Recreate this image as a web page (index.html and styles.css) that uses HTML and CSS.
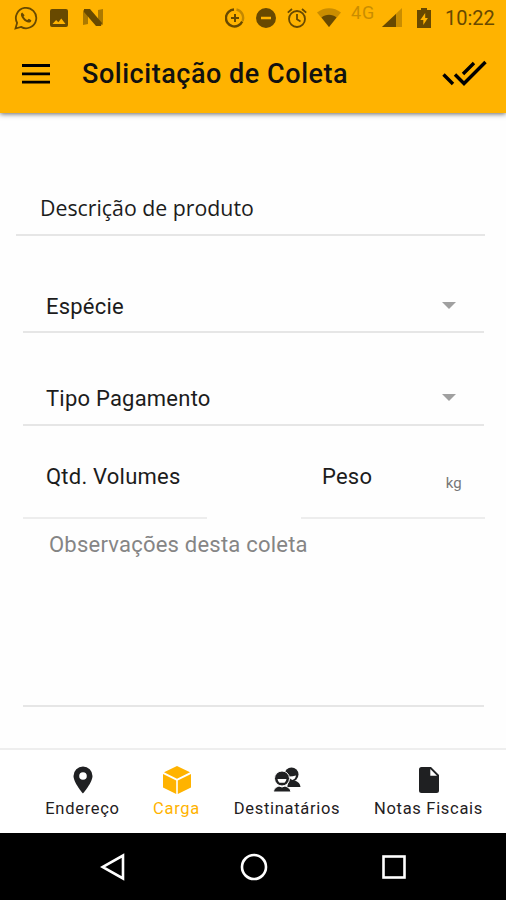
FILE: index.html
```html
<!DOCTYPE html>
<html lang="pt-BR">
<head>
    <meta charset="UTF-8">
    <meta name="viewport" content="width=device-width, initial-scale=1.0">
    <title>Solicitação de Coleta</title>
    <link rel="stylesheet" href="styles.css">
</head>
<body>
    <header class="topo">
        <div class="status">
            <svg class="s-whats" width="24" height="24" viewBox="0 0 24 24"><path d="M1.5 22.5l1.6-5.6A10.2 10.2 0 1 1 7 20.9z" fill="none" stroke="currentColor" stroke-width="1.8"/><path d="M8.2 6.5c-1.7.8-1.6 2.8-.5 4.7 1.5 2.7 3.6 4.6 6.3 5.3 1.9.5 3.3-.6 3.3-2.3l-2.500-1.400-1.400 1.300c-1.800-.7-3.100-1.900-3.800-3.500l1-1.300z" fill="currentColor"/></svg>
            <svg class="s-foto" width="18" height="18" viewBox="0 0 18 18"><path fill="currentColor" fill-rule="evenodd" d="M2 0h14a2 2 0 0 1 2 2v14a2 2 0 0 1-2 2H2a2 2 0 0 1-2-2V2a2 2 0 0 1 2-2zM2.500 15h13l-4.200-5.500-3 3.800-2.200-2.400z"/></svg>
            <svg class="s-n" width="20" height="17" viewBox="0 0 20 17"><path d="M0 1l5 3v11l-5 1zM15 1l5-1v16l-5-3z" fill="currentColor" opacity=".55"/><path d="M1 0h6l12 14-1 3h-5L1 3z" fill="currentColor"/></svg>

            <svg class="s-dados" width="20" height="20" viewBox="0 0 20 20"><g fill="none" stroke="currentColor" stroke-width="2.4"><path d="M9 1.500a8.500 8.500 0 1 0 8.200 12"/><path d="M11.500 1.500a8.500 8.500 0 0 1 6 11.500" opacity=".4"/><path d="M10 6v8M6 10h8" stroke-width="2"/></g></svg>
            <svg class="s-dnd" width="20" height="20" viewBox="0 0 20 20"><path fill="currentColor" fill-rule="evenodd" d="M10 0a10 10 0 1 1 0 20 10 10 0 0 1 0-20zM5 8.700v2.600h10V8.700z"/></svg>
            <svg class="s-alarme" width="20" height="20" viewBox="0 0 20 20"><g fill="none" stroke="currentColor" stroke-width="1.8"><circle cx="10" cy="11" r="8"/><path d="M10 6v5.200l3.500 2.200M.8 4.600L5 1M19.200 4.600L15 1"/></g></svg>
            <svg class="s-wifi" width="24" height="19" viewBox="0 0 24 19"><path d="M0 4.500C7-1.300 17-1.300 24 4.500L12 19z" fill="currentColor" opacity=".35"/><path d="M4.500 9.500c4-3.600 11-3.600 15 0L12 19z" fill="currentColor"/></svg>
            <span class="rede">4G</span>
            <svg class="s-sinal" width="20" height="19" viewBox="0 0 20 19"><path d="M20 0v19H0z" fill="currentColor" opacity=".35"/><path d="M14 6v13H0z" fill="currentColor"/></svg>
            <svg class="s-bateria" width="14" height="20" viewBox="0 0 14 20"><path fill="currentColor" fill-rule="evenodd" d="M4 0h6v2h4v18H0V2h4zM8.200 5L3.300 12H6.300v5l4.600-7H8.200z"/></svg>
            <span class="hora">10:22</span>
        </div>
        <div class="barra">
            <svg class="menu" width="28" height="20" viewBox="0 0 28 20"><path d="M0 1.500h28M0 9.800h28M0 18.100h28" stroke="#000" stroke-width="2.8"/></svg>
            <h1>Solicitação de Coleta</h1>
            <svg class="confirmar" width="46" height="28" viewBox="0 0 46 28"><path d="M2.500 14.500L12 24M14 14.500L23 23.500 44.500 2M22 14L33 3" fill="none" stroke="#000" stroke-width="3.4"/></svg>
        </div>
    </header>

    <main class="formulario">
        <div class="campo descricao">Descrição de produto</div>
        <div class="campo select especie">Espécie <span class="seta"></span></div>
        <div class="campo select pagamento">Tipo Pagamento <span class="seta"></span></div>
        <div class="linha">
            <div class="campo volumes">Qtd. Volumes</div>
            <div class="campo peso">Peso <span class="kg">kg</span></div>
        </div>
        <div class="campo observacoes">Observações desta coleta</div>
    </main>

    <nav class="abas">
        <a class="aba endereco">
            <svg width="20" height="28" viewBox="0 0 20 28"><path fill="currentColor" fill-rule="evenodd" d="M10 .500a9.500 9.500 0 0 1 9.500 9.500C19.500 16.500 10 27.500 10 27.500S.500 16.500.500 10A9.500 9.500 0 0 1 10 .500zM10 6.200a3.800 3.800 0 1 0 0 7.600 3.800 3.800 0 0 0 0-7.600z"/></svg>
            <span>Endereço</span>
        </a>
        <a class="aba carga ativa">
            <svg width="28" height="28" viewBox="0 0 28 28"><path fill="currentColor" d="M14 0l13 6.200L14 12.800 1 6.200zM0 8l13.200 6.500V28L0 21.500zM28 8l-13.200 6.500V28L28 21.500z"/></svg>
            <span>Carga</span>
        </a>
        <a class="aba destinatarios">
            <svg width="28" height="26" viewBox="0 0 28 26"><path d="M14 20l2-6 6-.5c3.500 1.500 5 3 5.500 6.500z" fill="currentColor"/><circle cx="18.500" cy="7.500" r="7" fill="currentColor"/><path d="M16 9.500q4 0 7-1-.5 3.500-3.500 4.500-2.500-.5-3.500-3.500z" fill="#fff"/><path d="M.5 25c.5-4 3-5 5.500-6l3 1 3-1c3 1 5.500 2.500 6 6z" fill="currentColor" stroke="#fff"/><circle cx="9" cy="11.500" r="7.500" fill="currentColor" stroke="#fff"/><path d="M4.500 12h9q-.5 3-2 3.700H6.500q-1.500-.7-2-3.700z" fill="#fff"/></svg>
            <span>Destinatários</span>
        </a>
        <a class="aba notas">
            <svg width="20" height="26" viewBox="0 0 20 26"><path fill="currentColor" fill-rule="evenodd" d="M2.500 0H12l8 8v15.500a2.500 2.500 0 0 1-2.500 2.500h-15A2.500 2.500 0 0 1 0 23.500v-21A2.500 2.500 0 0 1 2.500 0zM11.300 2v6.700H18z"/></svg>
            <span>Notas Fiscais</span>
        </a>
    </nav>

    <footer class="android">
        <svg width="26" height="28" viewBox="0 0 26 28"><path d="M23 2.500v23L2.500 14z" fill="none" stroke="#fff" stroke-width="2.6"/></svg>
        <svg width="28" height="28" viewBox="0 0 28 28"><circle cx="14" cy="14" r="12" fill="none" stroke="#fff" stroke-width="2.6"/></svg>
        <svg width="26" height="26" viewBox="0 0 26 26"><rect x="2.500" y="2.500" width="21" height="21" fill="none" stroke="#fff" stroke-width="2.6"/></svg>
    </footer>
</body>
</html>
```
FILE: styles.css
```css
* {
    box-sizing: border-box;
}

body {
    margin: 0;
    height: 900px;
    display: flex;
    flex-direction: column;
    background-color: #fefefe;
    font-family: Roboto, sans-serif;
    color: #1c1c1c;
    overflow: hidden;
}

svg {
    display: block;
    flex-shrink: 0;
}

.topo {
    height: 113px;
    background-color: #ffb300;
    box-shadow: 0 1px 5px rgba(0, 0, 0, 0.6);
}

.status {
    height: 35px;
    display: flex;
    align-items: center;
    padding: 0 11px 0 14px;
    color: #684900;
}

.s-foto {
    margin-left: 12px;
}

.s-n {
    margin-left: 15px;
}

.s-dados {
    margin-left: auto;
}

.s-dnd {
    margin-left: 11px;
}

.s-alarme {
    margin-left: 11px;
}

.s-wifi {
    margin-left: 10px;
}

.rede {
    margin: -10px 0 0 10px;
    width: 25px;
    font-size: 18px;
    letter-spacing: 0.8px;
    opacity: 0.35;
}

.s-sinal {
    margin-left: 6px;
}

.s-bateria {
    margin-left: 15px;
}

.hora {
    width: 50px;
    margin-left: 14px;
    padding-top: 1px;
    font-size: 20px;
    white-space: nowrap;
}

.barra {
    height: 77px;
    display: flex;
    align-items: center;
    padding: 0 19px 0 22px;
}

h1 {
    margin: 0 0 0 32px;
    font-size: 27px;
    font-weight: 500;
    letter-spacing: 0.54px;
    color: #111;
    white-space: nowrap;
}

.confirmar {
    margin-left: auto;
}

.formulario {
    height: 635px;
    padding: 0 22px 0 23px;
}

.campo {
    display: flex;
    align-items: flex-end;
    border-bottom: 2px solid #e6e6e6;
    font-size: 22px;
    letter-spacing: 0.22px;
    line-height: 26px;
    padding-left: 23px;
    white-space: nowrap;
}

.descricao {
    height: 123px;
    margin-left: -7px;
    margin-right: -1px;
    padding: 0 0 13px 24px;
    font-family: "Open Sans", sans-serif;
    font-size: 21.3px;
    letter-spacing: 0;
}

.especie {
    height: 97px;
    padding-bottom: 11px;
}

.pagamento {
    height: 93px;
    padding-bottom: 12px;
}

.select {
    justify-content: space-between;
}

.seta {
    margin: 0 28px 11px 0;
    border: 7px solid transparent;
    border-top-color: #a0a0a0;
    border-bottom: 0;
}

.linha {
    display: flex;
    justify-content: space-between;
    margin-right: -1px;
}

.volumes,
.peso {
    width: 184px;
    height: 93px;
    padding-bottom: 27px;
    border-color: #ededed;
}

.peso {
    padding-left: 21px;
    justify-content: space-between;
}

.kg {
    margin: 0 23px -6px 0;
    font-size: 15px;
    color: #777;
}

.observacoes {
    height: 188px;
    align-items: flex-start;
    padding: 13px 0 0 26px;
    color: #858585;
}

.abas {
    height: 85px;
    display: flex;
    border-top: 2px solid #eee;
    background-color: #fff;
    padding-left: 45px;
}

.aba {
    display: flex;
    flex-direction: column;
    align-items: center;
    padding-top: 16px;
    font-size: 16.5px;
    letter-spacing: 0.7px;
    white-space: nowrap;
    color: #1f2022;
}

.aba svg {
    height: 28px;
}

.aba span {
    margin-top: 5px;
    line-height: 20px;
}

.endereco {
    width: 75px;
}

.carga {
    width: 47px;
    margin-left: 33px;
}

.destinatarios {
    width: 106px;
    margin-left: 34px;
}

.notas {
    width: 109px;
    margin-left: 34px;
}

.ativa {
    color: #ffb300;
}

.android {
    height: 67px;
    display: flex;
    align-items: center;
    justify-content: space-between;
    padding: 0 99px 0 100px;
    background-color: #000;
}
```
